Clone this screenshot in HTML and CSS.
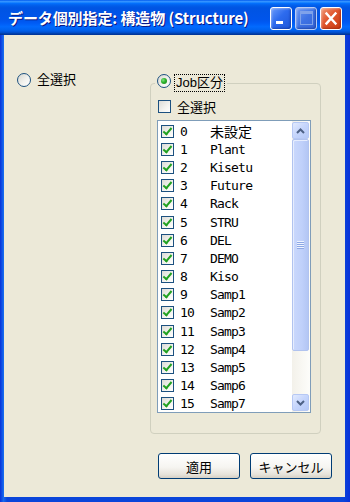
FILE: index.html
```html
<!DOCTYPE html>
<html lang="ja">
<head>
  <meta charset="UTF-8">
  <title>データ個別指定: 構造物 (Structure)</title>
  <link rel="stylesheet" href="styles.css">
</head>
<body>
  <div class="window">
    <div class="titlebar">
      <span class="title">データ個別指定: 構造物 (Structure)</span>
      <div class="caption-btns">
        <span class="cap-btn cap-min"></span>
        <span class="cap-btn cap-max"></span>
        <span class="cap-btn cap-close">
          <svg viewBox="0 0 22 23" width="22" height="23"><path d="M6.5 6.5 L15.5 16.5 M15.5 6.5 L6.5 16.5" stroke="#fff" stroke-width="2.4" stroke-linecap="square"/></svg>
        </span>
      </div>
    </div>

    <div class="client">
      <div class="top">
        <label class="opt-all"><span class="radio"></span>全選択</label>

        <fieldset class="group">
          <legend><span class="radio on"></span><span class="focus">Job区分</span></legend>
          <label class="chk-row"><span class="chk"></span>全選択</label>

          <div class="listbox">
            <ul class="items">
              <li><span class="chk on"></span><span class="num">0</span><span class="name ja">未設定</span></li>
              <li><span class="chk on"></span><span class="num">1</span><span class="name">Plant</span></li>
              <li><span class="chk on"></span><span class="num">2</span><span class="name">Kisetu</span></li>
              <li><span class="chk on"></span><span class="num">3</span><span class="name">Future</span></li>
              <li><span class="chk on"></span><span class="num">4</span><span class="name">Rack</span></li>
              <li><span class="chk on"></span><span class="num">5</span><span class="name">STRU</span></li>
              <li><span class="chk on"></span><span class="num">6</span><span class="name">DEL</span></li>
              <li><span class="chk on"></span><span class="num">7</span><span class="name">DEMO</span></li>
              <li><span class="chk on"></span><span class="num">8</span><span class="name">Kiso</span></li>
              <li><span class="chk on"></span><span class="num">9</span><span class="name">Samp1</span></li>
              <li><span class="chk on"></span><span class="num">10</span><span class="name">Samp2</span></li>
              <li><span class="chk on"></span><span class="num">11</span><span class="name">Samp3</span></li>
              <li><span class="chk on"></span><span class="num">12</span><span class="name">Samp4</span></li>
              <li><span class="chk on"></span><span class="num">13</span><span class="name">Samp5</span></li>
              <li><span class="chk on"></span><span class="num">14</span><span class="name">Samp6</span></li>
              <li><span class="chk on"></span><span class="num">15</span><span class="name">Samp7</span></li>
            </ul>
            <div class="scrollbar">
              <span class="sb-btn">
                <svg viewBox="0 0 9 6" width="9" height="6"><polyline points="1,5 4.5,1.5 8,5" fill="none" stroke="#4D6185" stroke-width="2"/></svg>
              </span>
              <span class="sb-thumb"></span>
              <span class="sb-track"></span>
              <span class="sb-btn">
                <svg viewBox="0 0 9 6" width="9" height="6"><polyline points="1,1 4.5,4.5 8,1" fill="none" stroke="#4D6185" stroke-width="2"/></svg>
              </span>
            </div>
          </div>
        </fieldset>
      </div>

      <div class="actions">
        <button>適用</button>
        <button>キャンセル</button>
      </div>
    </div>
  </div>
</body>
</html>
```

FILE: styles.css
```css
* { box-sizing: border-box; margin: 0; padding: 0; }
body {
  width: 350px;
  height: 502px;
  font-family: "Liberation Sans", "Noto Sans CJK JP", sans-serif;
  font-size: 13px;
  color: #000;
  overflow: hidden;
}
.window {
  width: 350px;
  height: 502px;
  display: flex;
  flex-direction: column;
  background: linear-gradient(90deg, #0831D9 0%, #166AEE 1%, #0A45DA 2%, #0A45DA 98%, #0831D9 100%);
}

/* title bar */
.titlebar {
  height: 35px;
  flex: none;
  display: flex;
  align-items: center;
  padding: 0 8px 0 8px;
  background: linear-gradient(180deg, #0058EE 0%, #3593FF 4%, #288EFF 6%, #127DFF 8%, #036FFC 10%, #0262EE 14%, #0057E5 20%, #0054E3 24%, #0055EB 56%, #005BF5 66%, #026AFE 76%, #0062EF 86%, #0052D6 92%, #0040AB 96%, #003092 100%);
}
.title {
  flex: 1;
  color: #fff;
  font-family: "Noto Sans CJK JP", sans-serif;
  font-weight: 700;
  font-size: 15px;
  letter-spacing: -0.1px;
  text-shadow: 1px 1px 0 #0A1883;
  white-space: nowrap;
}
.caption-btns {
  display: flex;
  gap: 3px;
  margin-top: 1px;
}
.cap-btn {
  width: 22px;
  height: 23px;
  border: 1px solid #fff;
  border-radius: 3px;
  display: flex;
  background: linear-gradient(135deg, #6B9BFA 0%, #2D6BEE 45%, #1E56D8 100%);
  box-shadow: inset -1px -1px 2px rgba(0, 30, 120, 0.45), inset 1px 1px 2px rgba(255, 255, 255, 0.35);
}
.cap-min::after {
  content: "";
  width: 7px;
  height: 3px;
  background: #fff;
  margin: auto auto 5px 5px;
}
.cap-max {
  border-color: #B9CCF5;
  background: linear-gradient(135deg, #6F98F0 0%, #3E72E4 50%, #3463D6 100%);
}
.cap-max::after {
  content: "";
  width: 11px;
  height: 10px;
  margin: auto;
  border: 1px solid #7FA2EA;
  border-top-width: 3px;
}
.cap-close {
  background: linear-gradient(135deg, #F09A78 0%, #E0552C 45%, #C93B12 100%);
  box-shadow: inset -1px -1px 2px rgba(120, 20, 0, 0.45), inset 1px 1px 2px rgba(255, 255, 255, 0.35);
}
.cap-close svg { display: block; margin: -1px; }

/* dialog body */
.client {
  flex: 1;
  background: #ECE9D8;
  margin: 0 5px 5px 4px;
  display: flex;
  flex-direction: column;
}
.top {
  display: flex;
  align-items: flex-start;
}
.opt-all {
  width: 146px;
  margin-top: 37px;
  padding-left: 13px;
  display: flex;
  align-items: center;
  gap: 6px;
  line-height: 16px;
}

.radio {
  width: 14px;
  height: 14px;
  flex: none;
  border-radius: 50%;
  border: 1px solid #1C5180;
  background: linear-gradient(135deg, #D6D6CF 0%, #F2F2EE 55%, #FFFFFF 100%);
  display: flex;
  align-items: center;
  justify-content: center;
}
.radio.on::after {
  content: "";
  width: 6px;
  height: 6px;
  border-radius: 50%;
  background: radial-gradient(circle at 35% 35%, #7EE27E 0%, #2BB12B 45%, #1A7D1A 100%);
}

.chk {
  width: 13px;
  height: 13px;
  flex: none;
  position: relative;
  border: 1px solid #1C5180;
  background: linear-gradient(135deg, #DCDCD7 0%, #F4F4F0 60%, #FFFFFF 100%);
}
.chk.on::after {
  content: "";
  position: absolute;
  left: 3px;
  top: 0;
  width: 3px;
  height: 7px;
  border: solid #21A121;
  border-width: 0 2.5px 2.5px 0;
  transform: rotate(40deg);
}

/* group box */
.group {
  width: 171px;
  margin-top: 39px;
  padding: 0 9px 20px 6px;
  border: 1px solid #D0D0BF;
  border-radius: 4px;
}
.group legend {
  display: flex;
  align-items: center;
  gap: 3px;
  height: 18px;
  padding: 0 2px;
  margin-left: -2px;
}
.group legend .radio { margin-bottom: 5px; }
.focus {
  border: 1px dotted #000;
  padding: 0 1px;
  line-height: 16px;
}
.chk-row {
  margin-top: 7px;
  height: 14px;
  padding-left: 1px;
  display: flex;
  align-items: center;
  gap: 6px;
}

/* list */
.listbox {
  margin-top: 7px;
  height: 293px;
  border: 1px solid #7F9DB9;
  background: #fff;
  display: flex;
}
.items {
  flex: 1;
  list-style: none;
  padding-top: 1px;
  font-family: "DejaVu Sans Mono", "Noto Sans CJK JP", monospace;
  font-size: 13px;
  letter-spacing: -0.8px;
}
.items li {
  height: 18.2px;
  display: flex;
  align-items: center;
  padding-left: 3px;
}
.items .chk { margin-right: 6px; }
.num { width: 30px; }
.name.ja {
  font-family: "Noto Sans CJK JP", sans-serif;
  font-size: 14px;
  letter-spacing: 0;
}

.scrollbar {
  width: 18px;
  display: flex;
  flex-direction: column;
  padding: 1px 1px 1px 0;
  background: linear-gradient(90deg, #F3F1EA 0%, #FDFDFA 100%);
}
.sb-btn {
  height: 17px;
  flex: none;
  border: 1px solid #B6C8F4;
  border-radius: 2px;
  background: linear-gradient(135deg, #E2EAFE 0%, #C5D5FC 50%, #B4C8F7 100%);
  display: flex;
  align-items: center;
  justify-content: center;
}
.sb-btn svg { display: block; }
.sb-thumb {
  height: 212px;
  flex: none;
  border: 1px solid #B1C3EF;
  border-radius: 2px;
  background: linear-gradient(90deg, #CAD8FC 0%, #BFD0FA 60%, #B3C6F4 100%);
  box-shadow: inset 1px 1px 0 #E6EDFE;
  display: flex;
  align-items: center;
  justify-content: center;
}
.sb-thumb::after {
  content: "";
  width: 7px;
  height: 8px;
  background: repeating-linear-gradient(180deg, #EEF3FF 0, #EEF3FF 1px, #8DA8E5 1px, #8DA8E5 2px);
}
.sb-track { flex: 1; }

/* buttons */
.actions {
  display: flex;
  justify-content: flex-end;
  gap: 10px;
  margin-top: 19px;
  padding-right: 13px;
}
.actions button {
  width: 82px;
  height: 26px;
  border: 1px solid #003C74;
  border-radius: 3px;
  background: linear-gradient(180deg, #FFFFFF 0%, #F6F5F1 55%, #E6E3DA 85%, #D6D0C5 100%);
  font-family: "Noto Sans CJK JP", sans-serif;
  font-size: 13px;
  color: #000;
}
```
